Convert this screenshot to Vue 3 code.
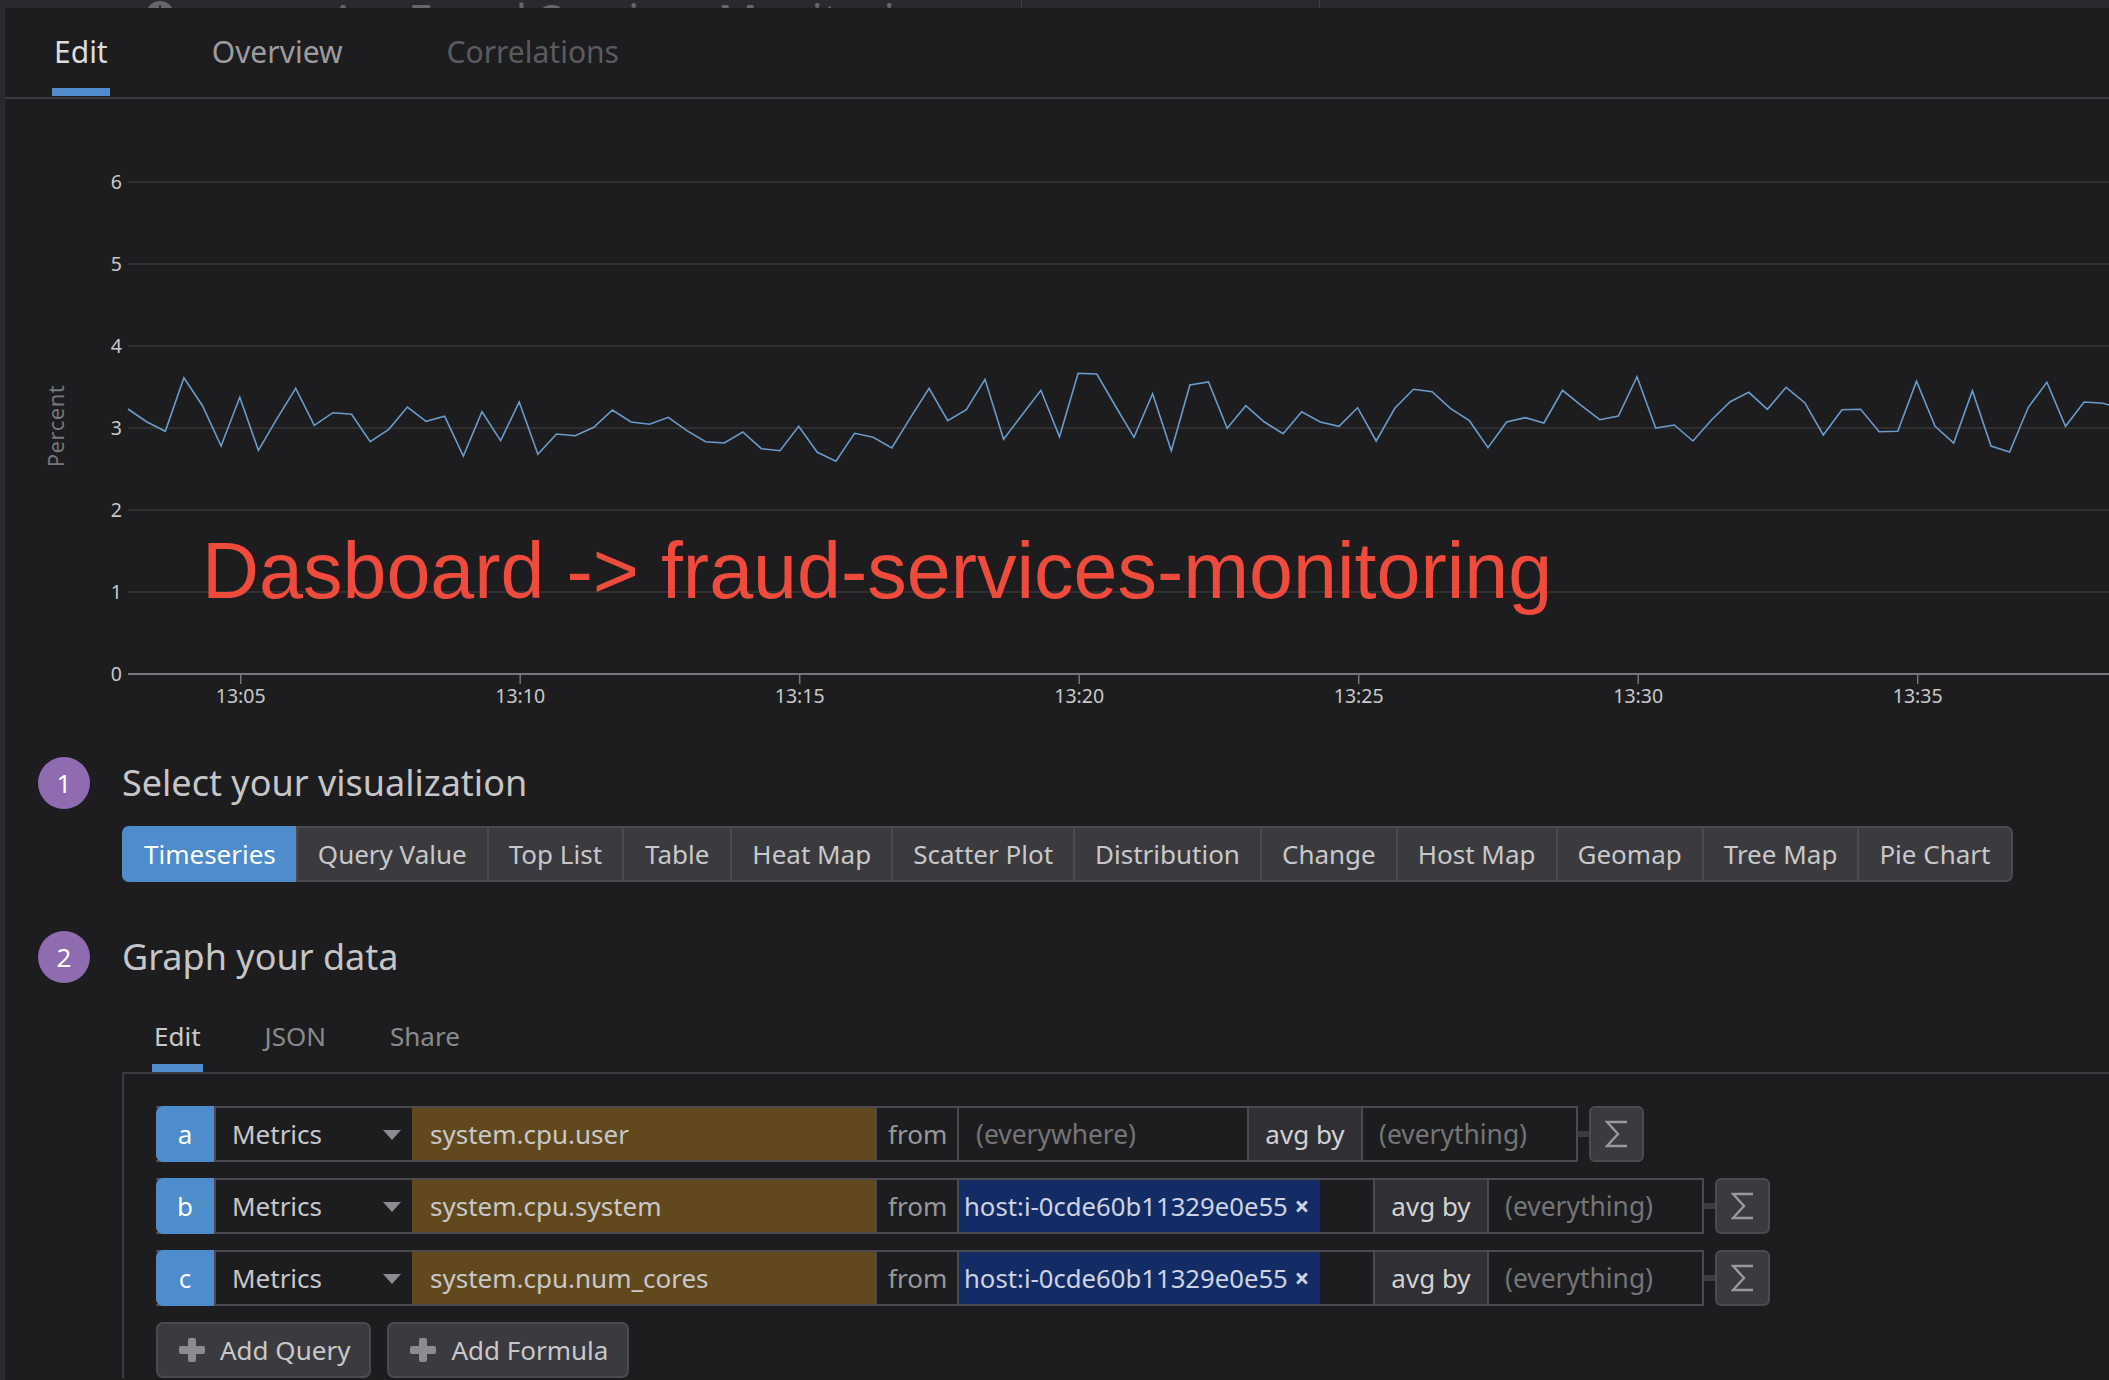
<template>
  <div class="page">
    <div class="topstrip">
      <svg class="topicon" width="28" height="28" viewBox="0 0 28 28"><circle cx="14" cy="14" r="14" fill="#66666b" /><path d="M14 4v3" stroke="#2b2b2f" stroke-width="2" /></svg>
      <span class="toptitle first">A</span>
      <span class="toptitle">Fraud Services Monitoring</span>
      <i class="topdivider one"></i>
      <i class="topdivider two"></i>
    </div>
    <div class="panel">
      <div class="maintabs">
        <span v-for="t in mainTabs" :key="t.label" class="maintab" :class="t.cls">{{ t.label }}</span>
      </div>

      <div class="chart">
        <svg width="2109" height="622" class="chart-svg">
          <g v-for="g in gridLines" :key="g.v">
            <line x1="128" x2="2109" :y1="g.y" :y2="g.y" :stroke="g.v === 0 ? '#77777b' : '#363639'" :stroke-width="g.v === 0 ? 2 : 1.5" />
            <text x="122" :y="g.y + 7" text-anchor="end" class="axis-text">{{ g.v }}</text>
          </g>
          <g v-for="t in ticks" :key="t.label">
            <line :x1="t.x" :x2="t.x" y1="575" y2="585" stroke="#77777b" stroke-width="1.5" />
            <text :x="t.x" y="604" text-anchor="middle" class="axis-text">{{ t.label }}</text>
          </g>
          <polyline :points="linePoints" fill="none" stroke="#6a9bcb" stroke-width="1.6" />
          <text class="percent" text-anchor="middle" transform="translate(64 327) rotate(-90)">Percent</text>
        </svg>
        <div class="note">Dasboard -&gt; fraud-services-monitoring</div>
      </div>

      <div class="step step-one">
        <span class="badge">1</span>
        <h2>Select your visualization</h2>
      </div>
      <div class="vizbar">
        <span v-for="(v, i) in vizTypes" :key="v" class="viz" :class="{ active: i === 0 }">{{ v }}</span>
      </div>

      <div class="step step-two">
        <span class="badge">2</span>
        <h2>Graph your data</h2>
      </div>
      <div class="subtabs">
        <span class="subtab on">Edit</span>
        <span class="subtab">JSON</span>
        <span class="subtab">Share</span>
      </div>

      <div class="editor">
        <div v-for="q in queries" :key="q.id" class="query">
          <div class="qrow">
            <span class="qid">{{ q.id }}</span>
            <span class="qtype">Metrics<i class="caret"></i></span>
            <span class="qmetric">{{ q.metric }}</span>
            <span class="qfrom">from</span>
            <span v-if="q.host" class="qscope">
              <span class="chip">{{ q.host }} <b>×</b></span>
            </span>
            <span v-else class="qscope empty">(everywhere)</span>
            <span class="qavg">avg by</span>
            <span class="qby">(everything)</span>
          </div>
          <i class="link"></i>
          <span class="sigma">
            <svg width="24" height="30" viewBox="0 0 24 30"><path d="M22 3H2l11 12L2 27h20" fill="none" stroke="#99999c" stroke-width="2.4" /></svg>
          </span>
        </div>
        <div class="actions">
          <button class="addbtn">
            <svg width="26" height="24" viewBox="0 0 26 24"><path d="M9 2q0-2 2-2h4q2 0 2 2v6h7q2 0 2 2v4q0 2-2 2h-7v6q0 2-2 2h-4q-2 0-2-2v-6H2q-2 0-2-2v-4q0-2 2-2h7z" fill="#8c8c90" /></svg>
            Add Query
          </button>
          <button class="addbtn">
            <svg width="26" height="24" viewBox="0 0 26 24"><path d="M9 2q0-2 2-2h4q2 0 2 2v6h7q2 0 2 2v4q0 2-2 2h-7v6q0 2-2 2h-4q-2 0-2-2v-6H2q-2 0-2-2v-4q0-2 2-2h7z" fill="#8c8c90" /></svg>
            Add Formula
          </button>
        </div>
      </div>
    </div>
  </div>
</template>

<script setup>
import { computed } from 'vue';

const mainTabs = [
  { label: 'Edit', cls: 'on' },
  { label: 'Overview', cls: '' },
  { label: 'Correlations', cls: 'off' },
];

const vizTypes = ['Timeseries', 'Query Value', 'Top List', 'Table', 'Heat Map', 'Scatter Plot', 'Distribution', 'Change', 'Host Map', 'Geomap', 'Tree Map', 'Pie Chart'];

const queries = [
  { id: 'a', metric: 'system.cpu.user', host: '' },
  { id: 'b', metric: 'system.cpu.system', host: 'host:i-0cde60b11329e0e55' },
  { id: 'c', metric: 'system.cpu.num_cores', host: 'host:i-0cde60b11329e0e55' },
];

// svg sits 99px down the page
const top = 99;
const gridLines = [6, 5, 4, 3, 2, 1, 0].map((v) => ({ v, y: 674 - v * 82 - top }));
const ticks = ['13:05', '13:10', '13:15', '13:20', '13:25', '13:30', '13:35'].map((label, i) => ({
  label,
  x: 240.7 + i * 279.5,
}));

// sampled every 20s, read off the picture (zoom px, 3x from y=340)
const samples = [207, 245, 274, 113, 197, 318, 172, 331, 236, 145, 256, 218, 223, 305, 268, 201, 244, 229, 348, 215, 302, 186, 343, 282, 287, 262, 210, 246, 253, 232, 272, 305, 309, 276, 326, 332, 259, 337, 364, 280, 292, 324, 233, 145, 242, 209, 118, 298, 224, 151, 290, 100, 102, 198, 292, 161, 332, 135, 126, 265, 197, 246, 281, 215, 246, 259, 203, 303, 205, 148, 155, 206, 242, 323, 246, 233, 249, 151, 196, 239, 228, 110, 264, 255, 303, 240, 185, 157, 208, 142, 188, 285, 209, 208, 275, 274, 124, 259, 309, 152, 318, 336, 202, 127, 259, 186, 190, 205];

const linePoints = computed(() => samples.map((s, i) => `${(128 + i * 18.63).toFixed(1)},${(340 + s / 3 - top).toFixed(1)}`).join(' '));
</script>

<style>
html, body { background: #1d1d1f; }
</style>

<style scoped>
.page {
  width: 2109px;
  height: 1380px;
  overflow: hidden;
  background: #2a2a2e;
  font-family: "Noto Sans", sans-serif;
  color: #c8c8ca;
}
.topstrip {
  position: relative;
  height: 8px;
  overflow: hidden;
  display: flex;
  align-items: flex-start;
  padding-left: 146px;
}
.topicon { flex: none; margin-top: 1px; }
.toptitle {
  font-size: 44px;
  line-height: 30px;
  color: #66666b;
  white-space: nowrap;
  margin-top: 4px;
  margin-left: 30px;
}
.toptitle.first { margin-left: 155px; width: 49px; }
.topdivider { position: absolute; top: 0; bottom: 0; width: 1px; background: #3e3e42; }
.topdivider.one { left: 1021px; }
.topdivider.two { left: 1319px; }
.panel {
  margin-left: 5px;
  height: 1372px;
  background: #1d1d1f;
}
.maintabs {
  height: 89px;
  display: flex;
  align-items: flex-start;
  border-bottom: 2px solid #3c3c40;
  padding-left: 47px;
}
.maintab {
  font-size: 30px;
  line-height: 36px;
  padding-top: 26px;
  height: 88px;
  box-sizing: border-box;
  margin-right: 104px;
  color: #9c9c9f;
}
.maintab.on { color: #dcdcde; box-shadow: inset 0 -8px 0 #4e8ccb; padding-left: 2px; padding-right: 2px; margin-right: 102px; }
.maintab.off { color: #5b5b5f; }
.chart { position: relative; height: 622px; margin-left: -5px; }
.chart-svg { display: block; }
.axis-text { font-size: 19.5px; fill: #c8c8ca; font-family: "Noto Sans", sans-serif; }
.percent { font-size: 22px; letter-spacing: .5px; fill: #77777b; font-family: "Noto Sans", sans-serif; }
.note {
  position: absolute;
  left: 202px;
  top: 427px;
  font-family: "Liberation Sans", Arial, sans-serif;
  font-size: 79px;
  line-height: 90px;
  color: #ee4b3c;
  white-space: nowrap;
}
.step { display: flex; align-items: center; gap: 32px; padding-left: 33px; height: 52px; }
.step-one { margin-top: 36px; }
.step-two { margin-top: 49px; }
.step h2 { margin: -2px 0 0; font-size: 36px; font-weight: 400; color: #c6c6c8; }
.badge {
  width: 52px;
  height: 52px;
  flex: none;
  border-radius: 50%;
  background: #8f6bb0;
  color: #fff;
  display: flex;
  align-items: center;
  justify-content: center;
  font-size: 26px;
}
.vizbar {
  display: inline-flex;
  margin: 17px 0 0 117px;
  height: 56px;
  box-sizing: border-box;
  border: 2px solid #4a4a4f;
  border-radius: 7px;
  background: #3a3a3f;
  vertical-align: top;
}
.viz {
  display: flex;
  align-items: center;
  padding: 0 20px;
  font-size: 26px;
  color: #c8c8ca;
  border-left: 2px solid #4a4a4f;
  white-space: nowrap;
}
.viz:first-child { border-left: none; }
.viz:nth-child(4) { padding: 0 21px; }
.viz:last-child { padding-right: 21px; }
.viz.active {
  background: #4e8ccb;
  color: #fff;
  margin: -2px 0 -2px -2px;
  border-radius: 7px 0 0 7px;
  padding: 0 20px 0 22px;
}
.subtabs { display: flex; margin: 26px 0 0 147px; height: 63px; }
.subtab {
  font-size: 26px;
  line-height: 54px;
  margin-right: 60px;
  color: #8a8a8d;
  padding: 0 2px;
  box-sizing: border-box;
}
.subtab.on { color: #c8c8ca; box-shadow: inset 0 -8px 0 #4e8ccb; }
.editor {
  margin-left: 117px;
  border-top: 2px solid #3c3c40;
  border-left: 2px solid #3c3c40;
  padding: 32px 0 0 32px;
}
.query { display: flex; align-items: center; height: 56px; margin-bottom: 16px; }
.qrow {
  display: flex;
  height: 56px;
  box-sizing: border-box;
  border: 2px solid #4a4a4f;
  border-left: none;
  font-size: 26px;
  color: #c8c8ca;
}
.qrow > span { display: flex; align-items: center; box-sizing: border-box; white-space: nowrap; }
.qid {
  width: 58px;
  margin: -2px 0;
  justify-content: center;
  background: #4e8ccb;
  color: #fff;
  border-radius: 7px 0 0 7px;
}
.qtype {
  width: 198px;
  padding-left: 16px;
  border-left: 2px solid #4a4a4f;
  position: relative;
}
.caret {
  position: absolute;
  right: 11px;
  top: 22px;
  border: 9px solid transparent;
  border-top: 10px solid #8c8c90;
  border-bottom: none;
}
.qmetric { width: 463px; padding-left: 18px; background: #61491d; }
.qfrom { width: 82px; padding-left: 11px; color: #98989b; border-left: 2px solid #4a4a4f; }
.qscope { width: 416px; border-left: 2px solid #4a4a4f; }
.qscope.empty { width: 290px; padding-left: 17px; color: #757578; font-size: 26.4px; }
.chip {
  height: 100%;
  width: 361px;
  display: flex;
  align-items: center;
  background: #132c66;
  padding-left: 5px;
  color: #cdd3e0;
  font-size: 25.7px;
  box-sizing: border-box;
  white-space: pre;
}
.chip b { font-size: 26px; }
.qavg { width: 114px; justify-content: center; background: #303034; border-left: 2px solid #4a4a4f; color: #d2d2d4; }
.qby { width: 215px; padding-left: 16px; color: #757578; border-left: 2px solid #4a4a4f; font-size: 26.4px; }
.link { width: 11px; height: 6px; background: #3c3c40; }
.sigma {
  width: 55px;
  height: 56px;
  box-sizing: border-box;
  background: #3a3a3f;
  border: 2px solid #4a4a4f;
  border-radius: 6px;
  display: flex;
  align-items: center;
  justify-content: center;
}
.actions { display: flex; gap: 16px; }
.addbtn {
  height: 56px;
  padding: 0 19px 0 21px;
  display: flex;
  align-items: center;
  gap: 15px;
  background: #3a3a3f;
  border: 2px solid #4a4a4f;
  border-radius: 7px;
  color: #c8c8ca;
  font: 26px "Noto Sans", sans-serif;
}
</style>
